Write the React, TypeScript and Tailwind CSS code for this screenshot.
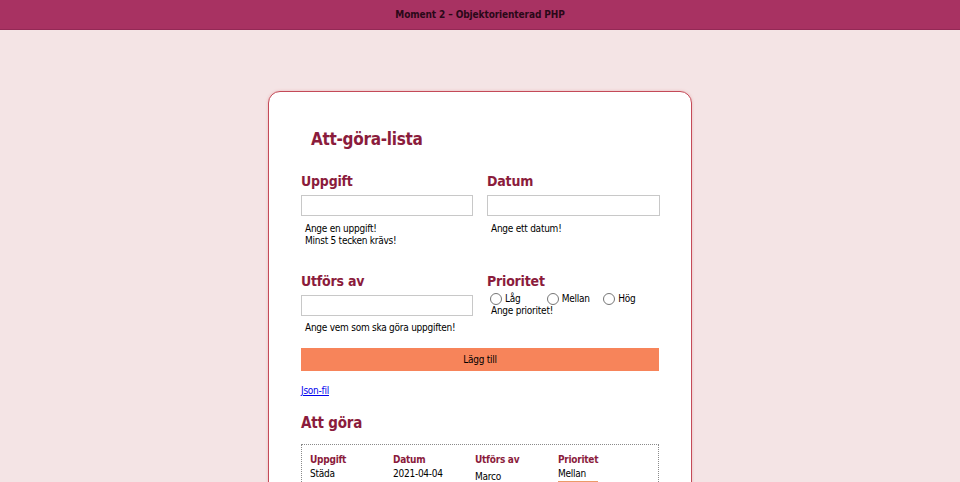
import React from "react";

const font = { fontFamily: '"DejaVu Sans Condensed", "DejaVu Sans", Verdana, sans-serif' };

function Radio({ label }: { label: string }) {
  return (
    <label className="flex w-[57px] items-center gap-[3px]">
      <span className="h-[12px] w-[12px] rounded-full border border-[#767676] bg-white" />
      <span>{label}</span>
    </label>
  );
}

export default function App() {
  return (
    <div className="min-h-[482px] bg-[#f4e4e5] text-[10px] leading-[12px] text-black" style={font}>
      <header className="flex h-[30px] items-center justify-center border-b border-[#932955] bg-[#a83262]">
        <span className="text-[10px] font-bold tracking-[-0.1px] text-[#2a0818]">Moment 2 – Objektorienterad PHP</span>
      </header>
      <main className="mx-auto mt-[61px] w-[424px] rounded-t-[12px] border border-[#c44a58] bg-white px-[32px] pb-[40px] pt-[37px] shadow-[0_0_3px_rgba(220,120,120,0.4)]">
        <h1 className="ml-[10px] text-[17px] font-bold leading-[20px] tracking-[-0.3px] text-[#8b1c3c]">Att-göra-lista</h1>
        <div className="mt-[23px] grid grid-cols-[172px_173px] gap-x-[14px] gap-y-[25px]">
          <div>
            <h2 className="text-[14px] font-bold leading-[18px] tracking-[-0.2px] text-[#8b1c3c]">Uppgift</h2>
            <input className="mt-[5px] block h-[21px] w-full border border-[#c8c8c8] bg-white" />
            <p className="mt-[7px] pl-[4px] tracking-[-0.25px]">Ange en uppgift!<br />Minst 5 tecken krävs!</p>
          </div>
          <div>
            <h2 className="text-[14px] font-bold leading-[18px] tracking-[-0.2px] text-[#8b1c3c]">Datum</h2>
            <input className="mt-[5px] block h-[21px] w-full border border-[#c8c8c8] bg-white" />
            <p className="mt-[7px] pl-[4px] tracking-[-0.25px]">Ange ett datum!</p>
          </div>
          <div>
            <h2 className="text-[14px] font-bold leading-[18px] tracking-[-0.2px] text-[#8b1c3c]">Utförs av</h2>
            <input className="mt-[5px] block h-[21px] w-full border border-[#c8c8c8] bg-white" />
            <p className="mt-[6px] pl-[4px] tracking-[-0.25px]">Ange vem som ska göra uppgiften!</p>
          </div>
          <div>
            <h2 className="text-[14px] font-bold leading-[18px] tracking-[-0.2px] text-[#8b1c3c]">Prioritet</h2>
            <div className="mt-[3px] flex pl-[3px] tracking-[-0.25px]">
              <Radio label="Låg" />
              <Radio label="Mellan" />
              <Radio label="Hög" />
            </div>
            <p className="pl-[4px] tracking-[-0.25px]">Ange prioritet!</p>
          </div>
        </div>
        <button className="mt-[14px] block h-[23px] w-full bg-[#f7845a] text-center text-[10px] tracking-[-0.25px]">Lägg till</button>
        <a href="#" className="mt-[14px] block w-fit tracking-[-0.25px] text-[#0000ee] underline">Json-fil</a>
        <h2 className="mt-[17px] text-[15px] font-bold leading-[18px] tracking-[-0.2px] text-[#8b1c3c]">Att göra</h2>
        <div className="mt-[12px] border border-dotted border-[#8a8a8a] pb-[8px] pl-[8px] pt-[9px] tracking-[-0.25px]">
          <div className="grid grid-cols-[83px_82px_83px_83px]">
            <span className="font-bold text-[#8b1c3c]">Uppgift</span>
            <span className="font-bold text-[#8b1c3c]">Datum</span>
            <span className="font-bold text-[#8b1c3c]">Utförs av</span>
            <span className="font-bold text-[#8b1c3c]">Prioritet</span>
          </div>
          <div className="mt-[2px] grid grid-cols-[83px_82px_83px_83px] items-start">
            <span>Städa</span>
            <span>2021-04-04</span>
            <span className="mt-[3px]">Marco</span>
            <span className="w-[40px] border-b-2 border-[#ec9a68] pb-[1px]">Mellan</span>
          </div>
        </div>
      </main>
    </div>
  );
}
